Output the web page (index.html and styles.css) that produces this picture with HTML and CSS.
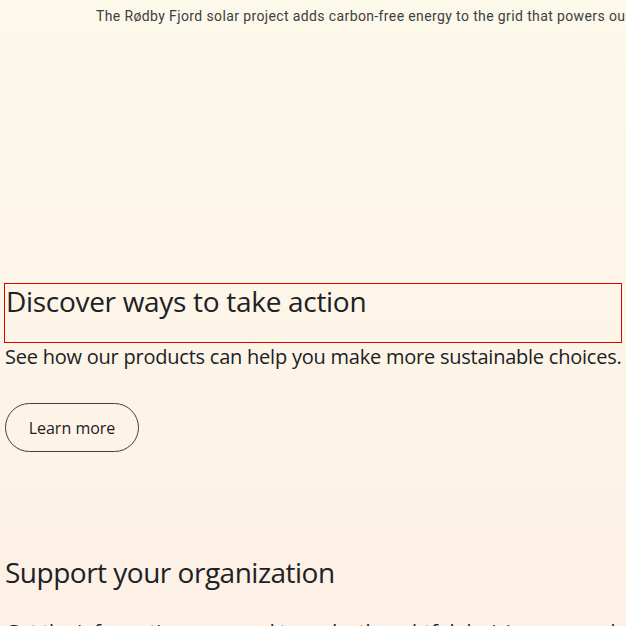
FILE: index.html
```html
<!DOCTYPE html>
<html lang="en">
<head>
<meta charset="utf-8">
<link rel="stylesheet" href="styles.css">
</head>
<body>
<div class="page">
  <p class="caption">The Rødby Fjord solar project adds carbon-free energy to the grid that powers our data center in Fredericia, Denmark.</p>
  <section class="block block-first">
    <h2 class="title title-outlined">Discover ways to take action</h2>
    <p class="lead">See how our products can help you make more sustainable choices.</p>
    <a class="btn" href="#">Learn more</a>
  </section>
  <section class="block block-second">
    <h2 class="title title-tight">Support your organization</h2>
    <p class="lead">Get the information you need to make thoughtful decisions around sustainability.</p>
  </section>
</div>
</body>
</html>
```
FILE: styles.css
```css
html, body {
  margin: 0;
  padding: 0;
}
body {
  width: 626px;
  height: 626px;
  overflow: hidden;
  background: linear-gradient(180deg, #fcf8ea 0%, #fdf5e8 50%, #fdf0e6 100%);
  color: #202124;
  font-family: "Open Sans", Roboto, sans-serif;
}
.page {
  padding: 0 0 0 4px;
  white-space: nowrap;
}
.caption {
  margin: 0;
  padding: 7px 0 0 92px;
  font-family: Roboto, sans-serif;
  font-size: 14px;
  line-height: 18px;
  letter-spacing: 0.38px;
  color: #3c4043;
}
.block-first {
  padding-top: 258px;
}
.title {
  margin: 0;
  font-weight: 400;
  font-size: 28px;
  line-height: 34px;
  letter-spacing: -0.3px;
  color: #202124;
  padding-left: 1px;
}
.title-tight {
  letter-spacing: -0.5px;
}
.title-outlined {
  border: 1px solid #e00000;
  height: 58px;
  margin-right: 4px;
}
.lead {
  margin: 0;
  padding-left: 1px;
  font-size: 20px;
  line-height: 28px;
  letter-spacing: -0.23px;
  color: #202124;
}
.btn {
  display: inline-flex;
  align-items: center;
  justify-content: center;
  margin-top: 32px;
  margin-left: 1px;
  width: 134px;
  height: 49px;
  box-sizing: border-box;
  border: 1px solid #3c4043;
  border-radius: 25px;
  font-size: 16px;
  color: #202124;
  text-decoration: none;
}
.block-second {
  padding-top: 103px;
}
.block-second .lead {
  margin-top: 29px;
}
```
